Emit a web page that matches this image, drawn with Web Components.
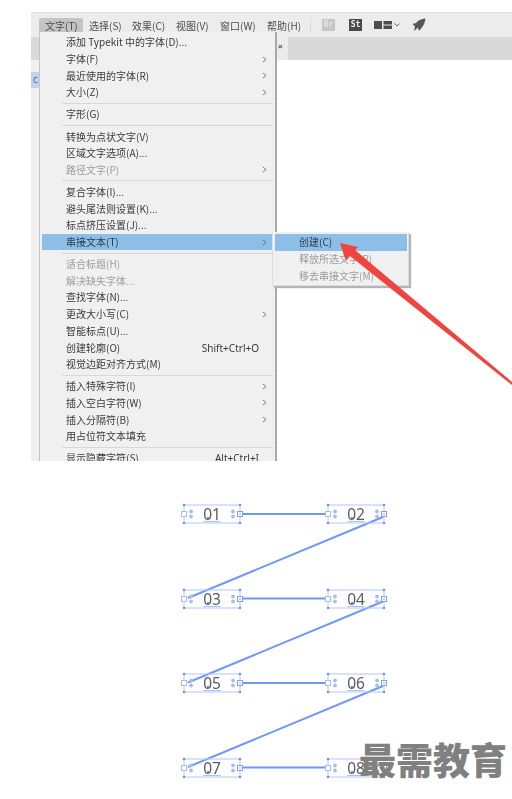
<!DOCTYPE html>
<html lang="zh">
<head>
<meta charset="utf-8">
<title>串接文本</title>
<style>
  html, body { margin: 0; background: #fff; }
  body { width: 512px; height: 799px; overflow: hidden; position: relative; font-family: "Noto Sans CJK SC", sans-serif; }
</style>
</head>
<body>
<ai-window>
  <type-menu>
    <menu-item label="添加 Typekit 中的字体(D)..."></menu-item>
    <menu-item label="字体(F)" arrow></menu-item>
    <menu-item label="最近使用的字体(R)" arrow></menu-item>
    <menu-item label="大小(Z)" arrow></menu-item>
    <menu-sep></menu-sep>
    <menu-item label="字形(G)"></menu-item>
    <menu-sep></menu-sep>
    <menu-item label="转换为点状文字(V)"></menu-item>
    <menu-item label="区域文字选项(A)..."></menu-item>
    <menu-item label="路径文字(P)" arrow disabled></menu-item>
    <menu-sep></menu-sep>
    <menu-item label="复合字体(I)..."></menu-item>
    <menu-item label="避头尾法则设置(K)..."></menu-item>
    <menu-item label="标点挤压设置(J)..."></menu-item>
    <menu-item label="串接文本(T)" arrow selected></menu-item>
    <menu-sep></menu-sep>
    <menu-item label="适合标题(H)" disabled></menu-item>
    <menu-item label="解决缺失字体..." disabled></menu-item>
    <menu-item label="查找字体(N)..."></menu-item>
    <menu-item label="更改大小写(C)" arrow></menu-item>
    <menu-item label="智能标点(U)..."></menu-item>
    <menu-item label="创建轮廓(O)" shortcut="Shift+Ctrl+O"></menu-item>
    <menu-item label="视觉边距对齐方式(M)"></menu-item>
    <menu-sep></menu-sep>
    <menu-item label="插入特殊字符(I)" arrow></menu-item>
    <menu-item label="插入空白字符(W)" arrow></menu-item>
    <menu-item label="插入分隔符(B)" arrow></menu-item>
    <menu-item label="用占位符文本填充"></menu-item>
    <menu-sep></menu-sep>
    <menu-item label="显示隐藏字符(S)" shortcut="Alt+Ctrl+I"></menu-item>
  </type-menu>
  <sub-menu>
    <menu-item label="创建(C)" selected></menu-item>
    <menu-item label="释放所选文字(R)" disabled></menu-item>
    <menu-item label="移去串接文字(M)" disabled></menu-item>
  </sub-menu>
</ai-window>
<thread-diagram>
  <thread-frame label="01"></thread-frame>
  <thread-frame label="02"></thread-frame>
  <thread-frame label="03"></thread-frame>
  <thread-frame label="04"></thread-frame>
  <thread-frame label="05"></thread-frame>
  <thread-frame label="06"></thread-frame>
  <thread-frame label="07"></thread-frame>
  <thread-frame label="08"></thread-frame>
</thread-diagram>
<water-mark>最需教育</water-mark>
<red-arrow></red-arrow>

<script>
const UI_FONT = '"Noto Sans CJK SC", sans-serif';

class aiWindow extends HTMLElement {
  constructor() {
    super();
    this.attachShadow({mode: 'open'});
  }
  connectedCallback() {
    const menus = [['文字(T)', 44], ['选择(S)', 43], ['效果(C)', 44], ['视图(V)', 44], ['窗口(W)', 47], ['帮助(H)', 38]];
    this.shadowRoot.innerHTML = `
      <style>
        :host { display: block; position: relative; height: 449px; margin: 12px 0 0 31px; overflow: hidden; filter: blur(.35px); font: 10px/16px ${UI_FONT}; color: #3a3a3a; }
        .bar { display: flex; align-items: center; height: 25px; background: #ececec; border-top: 1px solid #dcdcdc; box-sizing: border-box; padding-left: 8px; }
        .menus { display: flex; color: #4c4c4c; }
        .m { height: 20px; margin-top: 5px; line-height: 15px; padding-left: 6px; box-sizing: border-box; white-space: nowrap; }
        .m:first-child { background: #c4c4c4; border-radius: 2px 2px 0 0; }
        .sep { width: 1px; height: 15px; background: #dadada; margin: 0 11px; }
        .tool { width: 13px; height: 12px; font: bold 8px/12px "DejaVu Sans Mono", monospace; text-align: center; margin-right: 14px; }
        .br { background: #c6c6c6; color: #e6e6e6; }
        .st { background: #4a4a4a; color: #f2f2f2; margin-right: 12px; }
        .bar svg { display: block; flex: none; }
        .tabs { display: flex; height: 23px; background: #d9d9d9; }
        .tabs .left { width: 245px; }
        .tabs .tab { width: 12px; box-sizing: border-box; padding-left: 2px; background: #ececec; font: bold 8px/20px "Liberation Sans", sans-serif; color: #444; }
        .body { display: flex; height: 401px; background: #fff; }
        .panel { width: 9px; background: #f0f0f0; }
        .row { margin-top: 12px; height: 16px; background: #bcd4ee; font-size: 8px; line-height: 16px; text-indent: 2px; color: #555; }
      </style>
      <div class="bar">
        <div class="menus">
          ${menus.map(m => `<div class="m" style="width:${m[1]}px">${m[0]}</div>`).join('')}
        </div>
        <div class="sep"></div>
        <div class="tool br">Br</div>
        <div class="tool st">St</div>
        <svg width="27" height="10" viewBox="0 0 27 10" style="margin-right:11px">
          <path fill="#4d4d4d" d="M0 1h8v8H0zM9.500 1H18v3.500H9.500zM9.500 5.500H18V9H9.500z"/>
          <path fill="none" stroke="#666" stroke-width="1" d="M20.500 3.500l2.500 2.500 2.500-2.500"/>
        </svg>
        <svg width="14" height="14" viewBox="0 0 14 14">
          <path fill="#555" d="M13.500 .5C9 1 6 2.500 4 5L.5 6 3 8.500 2 13l4-3.500 1 3.500 2.500-3C12 7 13 4 13.500 .5z"/>
        </svg>
      </div>
      <div class="tabs">
        <div class="left"></div>
        <div class="tab">×</div>
      </div>
      <div class="body">
        <div class="panel"><div class="row">C</div></div>
      </div>
      <slot></slot>`;
  }
}
window.customElements.define('ai-window', aiWindow);

class typeMenu extends HTMLElement {
  constructor() {
    super();
    this.attachShadow({mode: 'open'}).innerHTML = `
      <style>
        :host { display: block; position: absolute; left: 8px; top: 20px; width: 238px; height: 440px; padding-top: 2px; box-sizing: border-box; background: #f0f0f0; border-right: 2px solid #a9a9a9; border-left: 1px solid #c4c4c4; }
      </style>
      <slot></slot>`;
  }
}
window.customElements.define('type-menu', typeMenu);

class subMenu extends HTMLElement {
  constructor() {
    super();
    this.attachShadow({mode: 'open'}).innerHTML = `
      <style>
        :host { display: block; position: absolute; left: 241px; top: 220px; width: 137px; height: 54px; padding-top: 2px; box-sizing: border-box; background: #f0f0f0; border: 1px solid #dedede; border-top: 0; box-shadow: 2px 2px 1px #b4b4b4; --item-indent: 24px; --item-gap: 1px; }
      </style>
      <slot></slot>`;
  }
}
window.customElements.define('sub-menu', subMenu);

class menuItem extends HTMLElement {
  constructor() {
    super();
    this.attachShadow({mode: 'open'});
  }
  connectedCallback() {
    const arrow = this.hasAttribute('arrow')
      ? '<svg width="5" height="7" viewBox="0 0 5 7"><path d="M1 .8l2.700 2.700L1 6.200" fill="none" stroke="#666" stroke-width="1"/></svg>' : '';
    const shortcut = this.getAttribute('shortcut');
    this.shadowRoot.innerHTML = `
      <style>
        :host { display: flex; align-items: center; height: 16.7px; margin-left: 2px; margin-right: var(--item-gap, 0px); padding: 0 8px 0 var(--item-indent, 24px); font: 10px/16px ${UI_FONT}; color: #3a3a3a; white-space: nowrap; }
        :host([disabled]) { color: #9c9c9c; }
        :host([selected]) { background: #8dbee8; color: #2f3a44; }
        .label { flex: 1; }
        .keys { font-family: "Noto Sans", sans-serif; margin-right: 8px; }
        svg { display: block; }
      </style>
      <span class="label">${this.getAttribute('label')}</span>
      ${shortcut ? `<span class="keys">${shortcut}</span>` : ''}${arrow}`;
  }
}
window.customElements.define('menu-item', menuItem);

class menuSep extends HTMLElement {
  constructor() {
    super();
    this.attachShadow({mode: 'open'}).innerHTML = `
      <style>
        :host { display: block; height: 1px; margin: 2.200px 2px 2.200px 22px; background: #d8d8d8; }
      </style>`;
  }
}
window.customElements.define('menu-sep', menuSep);

class threadFrame extends HTMLElement {
  constructor() {
    super();
    this.attachShadow({mode: 'open'});
  }
  connectedCallback() {
    const dots = [[0,0],[56,0],[0,18],[56,18]].map(p => `<circle cx="${p[0]}" cy="${p[1]}" r="1.300" fill="#6f93f5"/>`).join('');
    const eyes = [[7,6.500],[7,11.500],[49,6.500],[49,11.500]].map(p => `<circle cx="${p[0]}" cy="${p[1]}" r="1.900" fill="#a9bdf0"/>`).join('');
    this.shadowRoot.innerHTML = `
      <style>
        :host { display: block; position: relative; height: 19px; font: 400 15.500px/19px "Noto Sans", sans-serif; color: #5c5c5c; text-align: center; }
        svg { position: absolute; left: 0; top: 0; overflow: visible; }
        span { position: relative; }
      </style>
      <svg width="56" height="19" viewBox="0 0 56 19">
        <rect x="0" y="0" width="56" height="18" fill="none" stroke="#b3c6fa" stroke-width="1"/>
        <path d="M19.500 16.500h17" stroke="#a9bff8" stroke-width="1"/>
        <circle cx="24" cy="13" r="1.200" fill="#6f93f5"/>
        ${dots}${eyes}
        <rect x="-2.500" y="6.500" width="5" height="5" fill="#fff" stroke="#a5bcf7"/>
        <rect x="53.500" y="6.500" width="5" height="5" fill="#fff" stroke="#7f9ff5"/>
        <circle cx="56" cy="9" r=".8" fill="#6f93f5"/>
      </svg>
      <span>${this.getAttribute('label')}</span>`;
  }
}
window.customElements.define('thread-frame', threadFrame);

class threadDiagram extends HTMLElement {
  constructor() {
    super();
    this.attachShadow({mode: 'open'});
  }
  connectedCallback() {
    const links = [0, 84.500, 169, 253.500].map(y =>
      `<path d="M59 ${y + 9}H144"/>`).join('') + [0, 84.500, 169].map(y =>
      `<path d="M4 ${y + 93}L199 ${y + 12}"/>`).join('');
    this.shadowRoot.innerHTML = `
      <style>
        :host { display: grid; position: relative; width: 200px; margin: 44px 0 0 184px; grid-template-columns: 56px 56px; justify-content: space-between; row-gap: 65.500px; filter: blur(.3px); }
        svg { position: absolute; left: 0; top: 0; overflow: visible; pointer-events: none; }
        path { fill: none; stroke: #6e96fb; stroke-width: 2; }
      </style>
      <svg width="200" height="272" viewBox="0 0 200 272">${links}</svg>
      <slot></slot>`;
  }
}
window.customElements.define('thread-diagram', threadDiagram);

class waterMark extends HTMLElement {
  constructor() {
    super();
    this.attachShadow({mode: 'open'}).innerHTML = `
      <style>
        :host { display: block; position: absolute; left: 359px; top: 733px; font: 900 37px/52px "Noto Sans CJK SC", sans-serif; color: #808080; white-space: nowrap; }
      </style>
      <slot></slot>`;
  }
}
window.customElements.define('water-mark', waterMark);

class redArrow extends HTMLElement {
  constructor() {
    super();
    this.attachShadow({mode: 'open'}).innerHTML = `
      <style>
        :host { display: block; position: absolute; left: 336px; top: 240px; }
        svg { display: block; }
      </style>
      <svg width="176" height="152" viewBox="336 240 176 152">
        <polygon fill="#f0443f" points="340,243 358,247 355,250 512,382 512,385 350,256 346,261"/>
      </svg>`;
  }
}
window.customElements.define('red-arrow', redArrow);
</script>
</body>
</html>
